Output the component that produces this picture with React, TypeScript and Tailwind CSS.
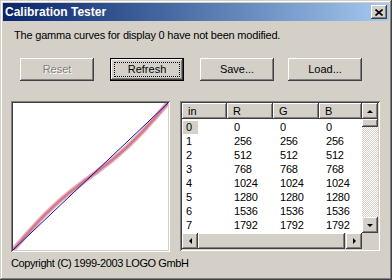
import type { ReactNode } from 'react';

const raised =
  'shadow-[inset_-1px_-1px_#404040,inset_1px_1px_#ffffff,inset_-2px_-2px_#808080,inset_2px_2px_#d4d0c8]';
const sunken =
  'shadow-[inset_1px_1px_#808080,inset_-1px_-1px_#ffffff,inset_2px_2px_#404040,inset_-2px_-2px_#d4d0c8]';

const rows = [0, 1, 2, 3, 4, 5, 6, 7];

function Button({ label, disabled, focused, className }: { label: string; disabled?: boolean; focused?: boolean; className?: string }) {
  return (
    <div
      className={`relative flex h-[23px] w-[74px] items-center justify-center bg-[#d4d0c8] ${
        focused ? 'border border-black shadow-[inset_-1px_-1px_#404040,inset_1px_1px_#ffffff,inset_-2px_-2px_#808080]' : raised
      } ${className ?? ''}`}
    >
      {focused && <div className="absolute inset-[3px] border border-dotted border-black" />}
      <span className={disabled ? 'text-[#808080] [text-shadow:1px_1px_#ffffff]' : 'text-black'}>{label}</span>
    </div>
  );
}

function Arrow({ dir }: { dir: 'up' | 'down' | 'left' | 'right' }) {
  const pts = {
    up: '4,1 7,4 1,4',
    down: '1,1 7,1 4,4',
    left: '4,1 4,7 1,4',
    right: '1,1 1,7 4,4',
  }[dir];
  const vertical = dir === 'up' || dir === 'down';
  return (
    <svg width={vertical ? 8 : 5} height={vertical ? 5 : 8} viewBox={vertical ? '0 0 8 5' : '0 0 5 8'}>
      <polygon points={pts} fill="black" />
    </svg>
  );
}

function ScrollBtn({ children }: { children: ReactNode }) {
  return <div className={`flex h-4 w-4 shrink-0 items-center justify-center bg-[#d4d0c8] ${raised}`}>{children}</div>;
}

function Curve() {
  const w = 155;
  const h = 147;
  const pts: string[] = [];
  for (let i = 0; i <= 60; i++) {
    const x = i / 60;
    const y = x + 0.035 * Math.sin(2 * Math.PI * x);
    pts.push(`${(x * w).toFixed(1)},${(h - y * h).toFixed(1)}`);
  }
  const d = 'M' + pts.join(' L');
  return (
    <svg width={w} height={h} viewBox={`0 0 ${w} ${h}`} className="block">
      <path d={d} fill="none" stroke="#eab6c0" strokeWidth={5} strokeLinecap="round" />
      <path d={d} fill="none" stroke="#d07a8c" strokeWidth={2.5} strokeLinecap="round" />
      <line x1={0} y1={h} x2={w} y2={0} stroke="#1010b0" strokeWidth={1} />
    </svg>
  );
}

export default function App() {
  return (
    <div
      className="flex h-[280px] w-[392px] flex-col bg-[#d4d0c8] p-[3px] text-[11px] leading-[13px] text-black shadow-[inset_-1px_-1px_#404040,inset_1px_1px_#d4d0c8,inset_-2px_-2px_#808080,inset_2px_2px_#ffffff]"
      style={{ fontFamily: '"Liberation Sans", Arial, sans-serif' }}
    >
      <div className="flex h-[18px] items-center justify-between bg-gradient-to-r from-[#0a246a] to-[#a6caf0] pl-[2px] pr-[2px]">
        <span className="text-[12px] font-bold text-white">Calibration Tester</span>
        <div className={`flex h-[14px] w-4 items-center justify-center bg-[#d4d0c8] ${raised}`}>
          <svg width="8" height="7" viewBox="0 0 8 7">
            <path d="M0.5 0.5 L7.5 6.5 M7.5 0.5 L0.5 6.5" stroke="black" strokeWidth={1.6} />
          </svg>
        </div>
      </div>

      <p className="mt-[8px] pl-[11px] tracking-[-0.2px]">The gamma curves for display 0 have not been modified.</p>

      <div className="mt-[16px] flex pl-[17px]">
        <Button label="Reset" disabled />
        <Button label="Refresh" focused className="ml-4" />
        <Button label="Save..." className="ml-4" />
        <Button label="Load..." className="ml-[14px]" />
      </div>

      <div className="mt-[20px] flex pl-[8px]">
        <div className={`h-[151px] w-[159px] bg-white p-[2px] ${sunken}`}>
          <Curve />
        </div>

        <div className={`ml-[10px] flex h-[150px] w-[200px] flex-col bg-white p-[2px] ${sunken}`}>
          <div className="flex min-h-0 flex-1">
            <div className="flex w-[180px] flex-col overflow-hidden">
              <div className="flex h-4 shrink-0 bg-[#d4d0c8]">
                {[
                  ['in', 'w-[45px]'],
                  ['R', 'w-[46px]'],
                  ['G', 'w-[46px]'],
                  ['B', 'w-[43px]'],
                ].map(([t, w]) => (
                  <div key={t} className={`flex items-center pl-[6px] ${w} ${raised}`}>
                    {t}
                  </div>
                ))}
              </div>
              <div className="pt-[1px] tracking-[-0.2px]">
                {rows.map((r) => (
                  <div key={r} className="flex h-[14px] items-center">
                    <div className="w-[45px] pl-[1px]">
                      <span className={`inline-block w-[15px] pl-[3px] ${r === 0 ? 'bg-[#d4d0c8]' : ''}`}>{r}</span>
                    </div>
                    <div className="w-[46px] pl-[7px]">{r * 256}</div>
                    <div className="w-[46px] pl-[7px]">{r * 256}</div>
                    <div className="w-[43px] pl-[7px]">{r * 256}</div>
                  </div>
                ))}
              </div>
            </div>
            <div className="flex w-4 flex-col bg-[repeating-conic-gradient(#ffffff_0_25%,#d4d0c8_0_50%)] bg-[length:2px_2px]">
              <ScrollBtn>
                <Arrow dir="up" />
              </ScrollBtn>
              <div className={`h-[8px] w-4 bg-[#d4d0c8] ${raised}`} />
              <div className="flex-1" />
              <ScrollBtn>
                <Arrow dir="down" />
              </ScrollBtn>
            </div>
          </div>
          <div className="flex h-4 shrink-0">
            <ScrollBtn>
              <Arrow dir="left" />
            </ScrollBtn>
            <div className={`w-[147px] bg-[#d4d0c8] ${raised}`} />
            <div className="flex-1 bg-[#d4d0c8]" />
            <ScrollBtn>
              <Arrow dir="right" />
            </ScrollBtn>
            <div className="w-4 bg-[#d4d0c8]" />
          </div>
        </div>
      </div>

      <p className="mt-[5px] pl-[8px] tracking-[-0.4px]">Copyright (C) 1999-2003 LOGO GmbH</p>
    </div>
  );
}
